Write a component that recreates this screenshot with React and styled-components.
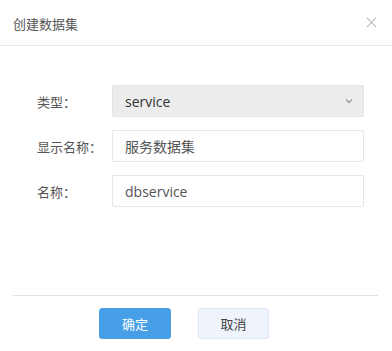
import React from "react";
import styled, { createGlobalStyle } from "styled-components";

const GlobalStyle = createGlobalStyle`
  body {
    margin: 0;
    background: #fff;
    font-family: "Open Sans", "Noto Sans CJK SC", sans-serif;
  }
`;

const Dialog = styled.div`
  width: 392px;
  height: 351px;
  background: #fff;
  display: flex;
  flex-direction: column;
`;

const Header = styled.div`
  height: 46px;
  border-bottom: 1px solid #e8e8f0;
  display: flex;
  align-items: center;
  justify-content: space-between;
  padding: 0 15px 0 13px;
  box-sizing: border-box;
`;

const Title = styled.span`
  font-size: 13px;
  color: #555;
  margin-top: 1px;
`;

const Close = styled.span`
  display: flex;
  align-items: center;
`;

const Body = styled.div`
  flex: 1;
  padding: 39px 28px 0 37px;
  display: flex;
  flex-direction: column;
  gap: 13px;
`;

const Row = styled.div`
  display: flex;
  align-items: center;
  height: 32px;
`;

const Label = styled.label`
  width: 75px;
  font-size: 13px;
  color: #555;
`;

const SelectBox = styled.div`
  flex: 1;
  height: 32px;
  box-sizing: border-box;
  border: 1px solid #e4e4e4;
  background: #ececec;
  border-radius: 2px;
  display: flex;
  align-items: center;
  justify-content: space-between;
  padding: 0 10px 0 12px;
  font-size: 14px;
  color: #333;
`;

const Input = styled.div`
  flex: 1;
  height: 32px;
  box-sizing: border-box;
  border: 1px solid #e6e6e6;
  border-radius: 2px;
  display: flex;
  align-items: center;
  padding: 0 12px;
  font-size: 14px;
  color: #555;
`;

const Footer = styled.div`
  margin: 0 14px 0 13px;
  border-top: 1px solid #e2e2e2;
  height: 56px;
  box-sizing: border-box;
  display: flex;
  align-items: flex-start;
  padding: 12px 0 0 86px;
  gap: 27px;
`;

const Button = styled.button`
  width: ${(p) => (p.$primary ? "72px" : "71px")};
  height: 31px;
  border-radius: 3px;
  font-family: inherit;
  font-size: 13px;
  cursor: pointer;
  border: 1px solid ${(p) => (p.$primary ? "#4a9fe6" : "#dfe7f5")};
  background: ${(p) => (p.$primary ? "#479fe7" : "#eef3fc")};
  color: ${(p) => (p.$primary ? "#fff" : "#444")};
`;

const App = () => {
  return (
    <Dialog>
      <GlobalStyle />
      <Header>
        <Title>创建数据集</Title>
        <Close>
          <svg width="11" height="11" viewBox="0 0 12 12">
            <path d="M1 1L11 11M11 1L1 11" stroke="#bbb" strokeWidth="1.3" />
          </svg>
        </Close>
      </Header>
      <Body>
        <Row>
          <Label>类型：</Label>
          <SelectBox>
            <span>service</span>
            <svg width="8" height="6" viewBox="0 0 8 6">
              <path d="M1 1.5L4 4.5L7 1.5" stroke="#999" strokeWidth="1.3" fill="none" />
            </svg>
          </SelectBox>
        </Row>
        <Row>
          <Label>显示名称：</Label>
          <Input>服务数据集</Input>
        </Row>
        <Row>
          <Label>名称：</Label>
          <Input>dbservice</Input>
        </Row>
      </Body>
      <Footer>
        <Button $primary>确定</Button>
        <Button>取消</Button>
      </Footer>
    </Dialog>
  );
};

export default App;
